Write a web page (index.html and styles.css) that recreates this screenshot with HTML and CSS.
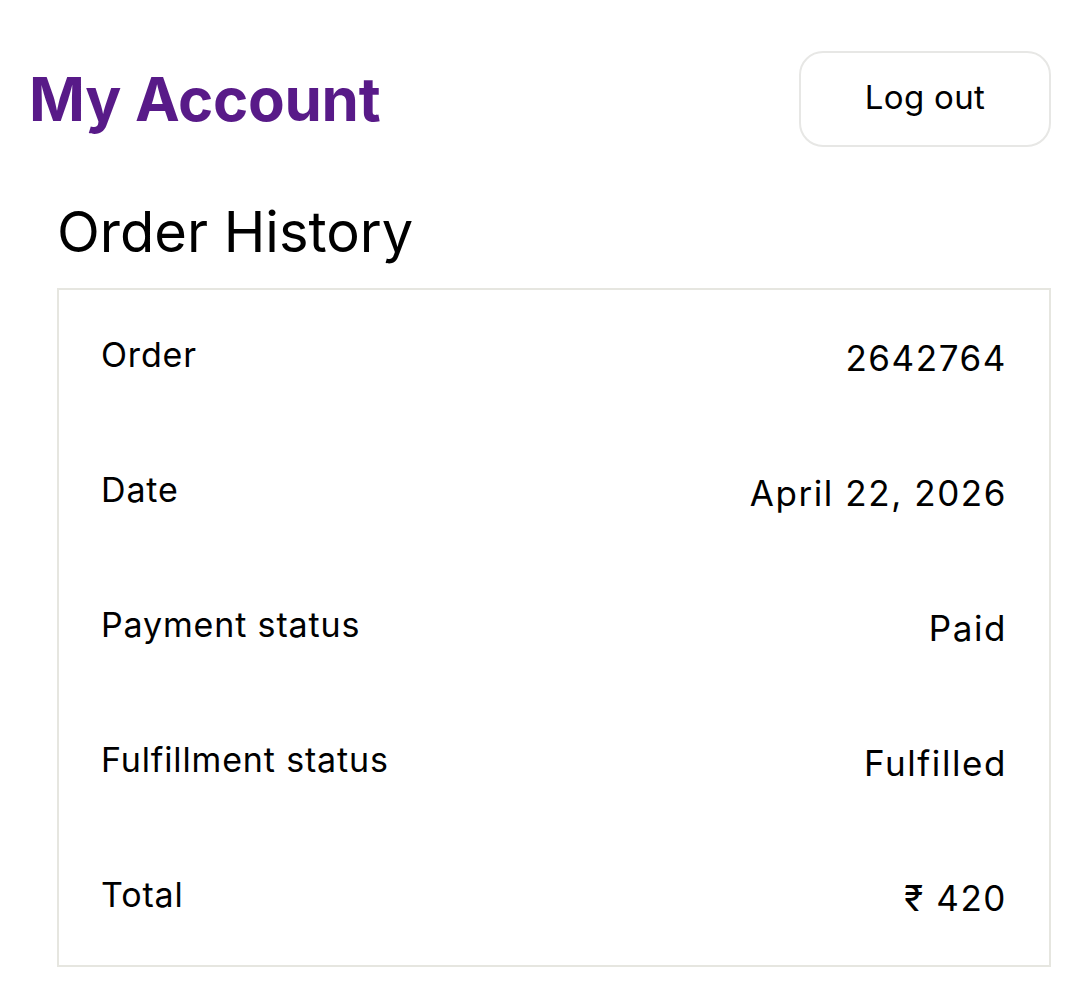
FILE: index.html
```html
<!DOCTYPE html>
<html lang="en">
<head>
<meta charset="utf-8">
<title>My Account</title>
<link rel="stylesheet" href="styles.css">
</head>
<body>
<header class="topbar">
  <h1 class="page-title">My Account</h1>
  <button class="logout-btn" type="button">Log out</button>
</header>
<main class="orders">
  <h2 class="orders-title">Order History</h2>
  <section class="order-card">
    <div class="row"><span class="label">Order</span><span class="value">2642764</span></div>
    <div class="row"><span class="label">Date</span><span class="value">April 22, 2026</span></div>
    <div class="row"><span class="label">Payment status</span><span class="value">Paid</span></div>
    <div class="row"><span class="label">Fulfillment status</span><span class="value">Fulfilled</span></div>
    <div class="row"><span class="label">Total</span><span class="value">₹ 420</span></div>
  </section>
</main>
</body>
</html>
```

FILE: styles.css
```css
* { box-sizing: border-box; }
html, body { margin: 0; padding: 0; background: #fff; }
body {
  font-family: Inter, "Noto Sans", "DejaVu Sans", sans-serif;
  color: #000;
}
.topbar {
  display: flex;
  justify-content: space-between;
  align-items: center;
  padding: 51px 29px 0 29px;
}
.page-title {
  margin: 0;
  font-family: Inter, "Liberation Sans", sans-serif;
  font-weight: 700;
  font-size: 60px;
  line-height: 1;
  letter-spacing: -0.005em;
  color: #581a88;
}
.logout-btn {
  width: 252px;
  height: 96px;
  background: #fff;
  border: 2px solid #e7e7e5;
  border-radius: 24px;
  font-family: Inter, sans-serif;
  font-size: 33px;
  color: #000;
  letter-spacing: 0.01em;
  padding: 0 0 4px;
}
.orders {
  padding: 0 29px 0 57px;
}
.orders-title {
  margin: 52px 0 22px;
  font-weight: 400;
  font-size: 56px;
  line-height: 1.2;
}
.order-card {
  border: 2px solid #e6e6e0;
  padding: 0 42px;
  display: flex;
  flex-direction: column;
}
.row {
  display: flex;
  justify-content: space-between;
  align-items: center;
  height: 135px;
}
.label {
  font-size: 34px;
  letter-spacing: 0.025em;
  transform: translateY(-3px);
}
.value {
  font-size: 35px;
  letter-spacing: 0.045em;
}
```
